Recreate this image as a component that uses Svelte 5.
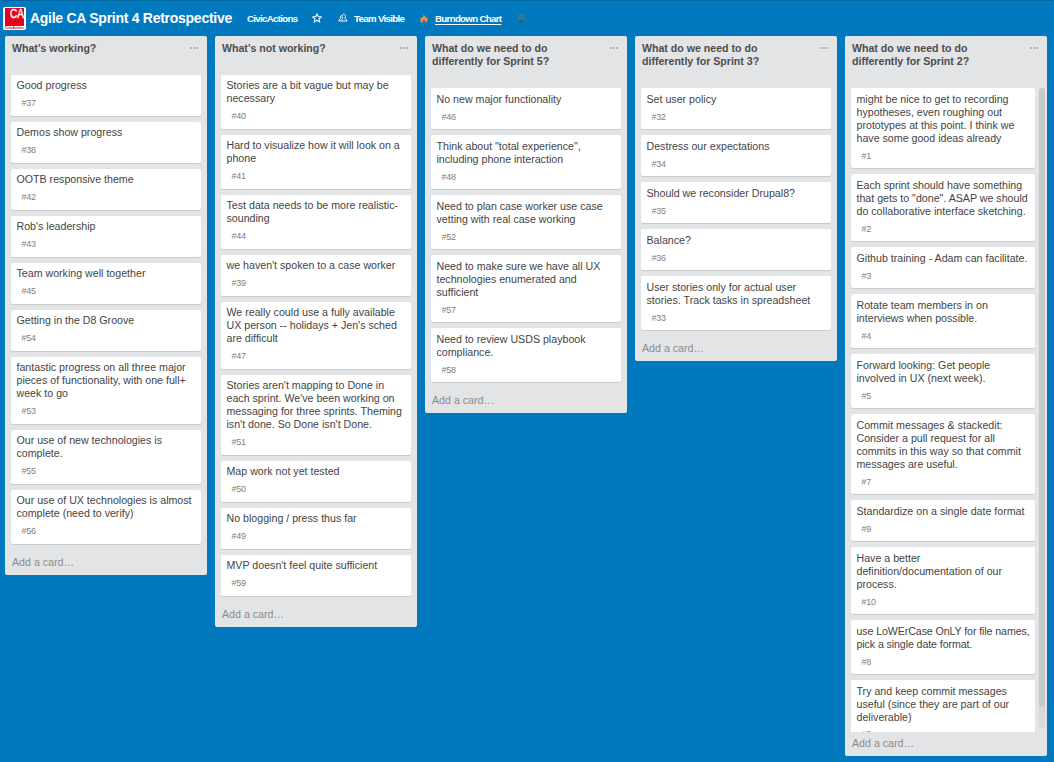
<script>
  const lists = [
    {
      title: "What's working?",
      cards: [
        ['Good progress', 37],
        ['Demos show progress', 38],
        ['OOTB responsive theme', 42],
        ["Rob's leadership", 43],
        ['Team working well together', 45],
        ['Getting in the D8 Groove', 54],
        ['fantastic progress on all three major\npieces of functionality, with one full+\nweek to go', 53],
        ['Our use of new technologies is\ncomplete.', 55],
        ['Our use of UX technologies is almost\ncomplete (need to verify)', 56]
      ]
    },
    {
      title: "What's not working?",
      cards: [
        ['Stories are a bit vague but may be\nnecessary', 40],
        ['Hard to visualize how it will look on a\nphone', 41],
        ['Test data needs to be more realistic-\nsounding', 44],
        ["we haven't spoken to a case worker", 39],
        ["We really could use a fully available\nUX person -- holidays + Jen's sched\nare difficult", 47],
        ["Stories aren't mapping to Done in\neach sprint. We've been working on\nmessaging for three sprints. Theming\nisn't done. So Done isn't Done.", 51],
        ['Map work not yet tested', 50],
        ['No blogging / press thus far', 49],
        ["MVP doesn't feel quite sufficient", 59]
      ]
    },
    {
      title: 'What do we need to do\ndifferently for Sprint 5?',
      tall: true,
      cards: [
        ['No new major functionality', 46],
        ['Think about "total experience",\nincluding phone interaction', 48],
        ['Need to plan case worker use case\nvetting with real case working', 52],
        ['Need to make sure we have all UX\ntechnologies enumerated and\nsufficient', 57],
        ['Need to review USDS playbook\ncompliance.', 58]
      ]
    },
    {
      title: 'What do we need to do\ndifferently for Sprint 3?',
      tall: true,
      cards: [
        ['Set user policy', 32],
        ['Destress our expectations', 34],
        ['Should we reconsider Drupal8?', 35],
        ['Balance?', 36],
        ['User stories only for actual user\nstories. Track tasks in spreadsheet', 33]
      ]
    },
    {
      title: 'What do we need to do\ndifferently for Sprint 2?',
      tall: true,
      scroll: true,
      cards: [
        ['might be nice to get to recording\nhypotheses, even roughing out\nprototypes at this point. I think we\nhave some good ideas already', 1],
        ['Each sprint should have something\nthat gets to "done". ASAP we should\ndo collaborative interface sketching.', 2],
        ['Github training - Adam can facilitate.', 3],
        ['Rotate team members in on\ninterviews when possible.', 4],
        ['Forward looking: Get people\ninvolved in UX (next week).', 5],
        ['Commit messages & stackedit:\nConsider a pull request for all\ncommits in this way so that commit\nmessages are useful.', 7],
        ['Standardize on a single date format', 9],
        ['Have a better\ndefinition/documentation of our\nprocess.', 10],
        ['use LoWErCase OnLY for file names,\npick a single date format.', 8, true],
        ['Try and keep commit messages\nuseful (since they are part of our\ndeliverable)', 6]
      ]
    }
  ];
</script>

<div class="page">
  <header>
    <svg class="logo" width="23" height="23" viewBox="0 0 23 23">
      <rect width="23" height="23" rx="2" fill="#fff" />
      <rect x="2" y="1" width="19" height="18" fill="#e3051b" />
      <text x="7" y="11" font-size="13.500" font-weight="normal" textLength="14" lengthAdjust="spacingAndGlyphs" fill="#fff" stroke="#fff" stroke-width=".4">CA</text>
      <text x="2" y="22" font-size="3.600" textLength="19" lengthAdjust="spacingAndGlyphs" fill="#e3051b">CivicActions</text>
    </svg>
    <h1>Agile CA Sprint 4 Retrospective</h1>
    <span class="org">CivicActions</span>
    <svg class="star" width="10" height="10" viewBox="0 0 10 10">
      <path d="M5 .9 6.200 3.600 9.200 3.900 7 5.900 7.600 8.900 5 7.400 2.400 8.900 3 5.900 .8 3.900 3.800 3.600Z" fill="none" stroke="#fff" stroke-width="1.050" />
    </svg>
    <svg class="people" width="10" height="10" viewBox="0 0 10 10">
      <path d="M5.700 1.200c1.500 0 2 1.100 1.700 2.500-.2 1-.6 1.400-.4 1.900.3.700 2 .7 2 2.400H2.900c.1-1.500 1.700-1.600 1.800-2.400 0-.5-.6-1-.7-1.900-.1-1.500.6-2.500 1.700-2.500ZM3.300 2.600C2.200 2.800 2.100 4.100 2.700 5 2.800 5.900.9 5.900.8 8h2" fill="none" stroke="#fff" stroke-width=".95" />
    </svg>
    <span class="visible">Team Visible</span>
    <svg class="flame" width="8" height="9" viewBox="0 0 8 9">
      <path d="M3.700 0c.2 1.300 1.900 2 2 3.600l.8-.8c.8 1.300 1.400 2.600.9 4.200C7.100 8.200 6.400 8.800 5.400 9 5.600 7.600 4.900 6.800 4 6 3.200 6.800 2.400 7.600 2.700 9 1.200 8.800.4 7.700.3 6.400.2 5 .9 4 1.300 2.900l.8 1C3.200 2.900 3.600 1.500 3.700 0Z" fill="#f08a3c" />
    </svg>
    <span class="burndown">Burndown Chart</span>
    <svg class="dot" width="8" height="9" viewBox="0 0 8 9">
      <rect x=".5" width="7" height="7" rx="2.500" fill="#35779a" />
      <path d="M1 6h6L5.500 8.700h-3Z" fill="#245f88" />
    </svg>
  </header>

  <main>
    {#each lists as list}
      <section class:scroll={list.scroll} class:tall={list.tall}>
        <div class="head">
          <h2>{list.title}</h2>
          <svg width="8" height="2" viewBox="0 0 8 2"><path d="M0 0h2v2H0zM3 0h2v2H3zM6 0h2v2H6z" fill="#b4b6b8" /></svg>
        </div>
        <div class="body">
          <div class="cards">
            {#each list.cards as [text, id, tight]}
              <article>
                <p class:tight>{text}</p>
                <small>#{id}</small>
              </article>
            {/each}
          </div>
          {#if list.scroll}
            <div class="track"><div class="thumb"></div></div>
          {/if}
        </div>
        <div class="add">Add a card…</div>
      </section>
    {/each}
  </main>
</div>

<style>
  :global(body) { margin: 0; }
  .page {
    box-sizing: border-box;
    width: 1054px;
    height: 762px;
    overflow: hidden;
    background: #0079bf;
    border-top: 1px solid #0067a3;
    font-family: "Liberation Sans", Arial, sans-serif;
    color: #444;
  }
  header {
    box-sizing: border-box;
    display: flex;
    align-items: center;
    height: 35px;
    padding: 0 0 1px 3px;
    color: #fff;
    font-weight: bold;
    font-size: 9.700px;
    letter-spacing: -.68px;
    white-space: nowrap;
  }
  header > * { flex: none; }
  h1 { margin: 0 0 0 4px; width: 217px; font-size: 14px; line-height: 20px; letter-spacing: -.27px; }
  .logo { letter-spacing: 0; }
  .org { width: 65px; }
  .people { margin-left: 16px; }
  .visible { margin-left: 6px; width: 66px; }
  .burndown { margin: 0 16px 0 7px; text-decoration: underline; text-underline-offset: 2px; }
  main { display: flex; align-items: flex-start; gap: 8px; padding-left: 5px; }
  section { width: 202px; flex: none; background: #e2e4e6; border-radius: 2px; }
  .head { display: flex; justify-content: space-between; padding: 6px 9px 20px 7px; }
  .head svg { margin-top: 5px; }
  h2 { margin: 0; font-size: 10.600px; line-height: 13px; white-space: pre; color: #4d4d4d; }
  .body { display: flex; }
  .cards { width: 190px; margin-left: 6px; }
  article {
    box-sizing: border-box;
    margin-bottom: 6px;
    padding: 4px 5px 6px 5.500px;
    background: #fff;
    border-radius: 2px;
    box-shadow: 0 1px 0 #c9cccd;
  }
  .tall article { padding-top: 5px; padding-bottom: 5px; }
  p { margin: 0; font-size: 10.650px; line-height: 13px; white-space: pre; }
  .tight { letter-spacing: -.1px; }
  small { display: block; margin: 5px 0 0 5px; font-size: 9px; letter-spacing: -.2px; line-height: 13px; color: #808080; }
  .scroll article:last-child small { margin-top: 4px; }
  .add { padding: 6px 7px; font-size: 10.650px; line-height: 13px; color: #8c8c8c; }
  .scroll .body { height: 644px; overflow: hidden; }
  .scroll .cards { width: 184px; }
  .scroll .add { padding-top: 5px; padding-bottom: 6px; }
  .track { width: 6px; height: 640px; margin-left: 4px; border-radius: 3px; background: #d6dadc; }
  .thumb { height: 619px; border-radius: 3px; background: #c4c9cc; }
</style>
